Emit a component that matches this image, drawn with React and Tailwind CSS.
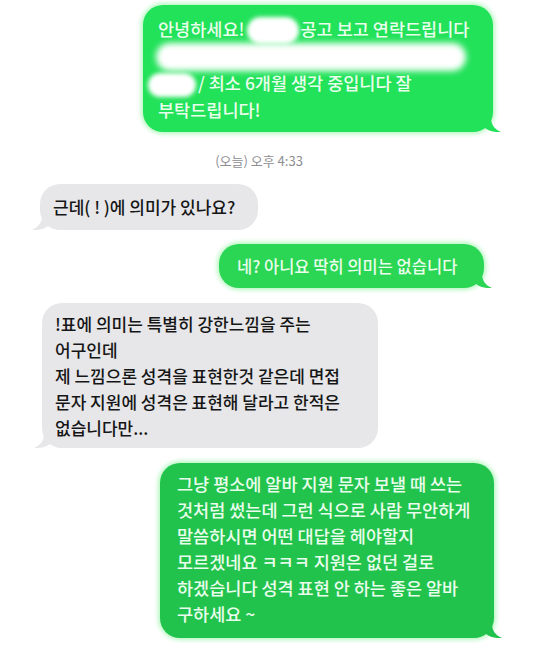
import React from 'react';

const font = { fontFamily: '"Noto Sans CJK KR", "Noto Sans", sans-serif' };

// Bubble tail, drawn as a small curl at the bottom corner
const Tail = ({ side, color }) => (
  <svg
    viewBox="0 0 16 14"
    className={`absolute bottom-0 w-[16px] h-[14px] ${side === 'right' ? '-right-[8px]' : '-left-[8px] -scale-x-100'}`}
  >
    <path d="M0 0 L6 0 C6 6 9 11 16 14 C10 14.6 4 13 0 10 Z" fill={color} />
  </svg>
);

const Sent = ({ color, className, children }) => (
  <div
    className={`relative self-end rounded-[20px] px-[15px] font-medium leading-[26px] text-[#e9fdec] shadow-[0_0_4px_2px_rgba(120,240,140,0.55)] ${className}`}
    style={{ backgroundColor: color }}
  >
    {children}
    <Tail side="right" color={color} />
  </div>
);

const Received = ({ className, children }) => (
  <div className={`relative self-start rounded-[20px] bg-[#e7e7ea] px-[13px] text-[17px] font-medium leading-[26px] text-[#161616] ${className}`}>
    {children}
    <Tail side="left" color="#e7e7ea" />
  </div>
);

const Blob = ({ className }) => (
  <span className={`inline-block align-middle rounded-full bg-white blur-[2px] ${className}`} />
);

export default function App() {
  return (
    <div className="w-[538px] h-[652px] bg-white overflow-hidden flex flex-col pt-[5px]" style={font}>
      {/* first message, partly censored */}
      <Sent color="#22e25a" className="w-[350px] mr-[45px] pt-[11px] pb-[9px] text-[17.5px] whitespace-nowrap">
        <div>
          안녕하세요!<Blob className="w-[52px] h-[27px] mx-[2px] -mt-[2px]" />공고 보고 연락드립니다
        </div>
        <div className="h-[26px] flex items-center">
          <span className="block w-[310px] h-[28px] -ml-[2px] rounded-full bg-white blur-[3px]" />
        </div>
        <div>
          <Blob className="w-[48px] h-[24px] -ml-[10px] mr-[2px]" />/ 최소 6개월 생각 중입니다 잘
        </div>
        <div>부탁드립니다!</div>
      </Sent>

      <div className="mt-[20px] pr-[20px] text-center text-[13px] leading-[18px] text-[#8d8d92]">(오늘) 오후 4:33</div>

      <Received className="ml-[40px] mt-[14px] w-[218px] py-[10px] whitespace-nowrap">근데(&nbsp;!&nbsp;)에 의미가 있나요?</Received>

      <Sent color="#2ad653" className="mt-[14px] mr-[54px] w-[265px] py-[9px] px-[18px] text-[16.5px] whitespace-nowrap">
        네? 아니요 딱히 의미는 없습니다
      </Sent>

      <Received className="ml-[42px] mt-[15px] w-[336px] pt-[8px] pb-[7px] whitespace-nowrap">
        <div>!표에 의미는 특별히 강한느낌을 주는</div>
        <div>어구인데</div>
        <div>제 느낌으론 성격을 표현한것 같은데 면접</div>
        <div>문자 지원에 성격은 표현해 달라고 한적은</div>
        <div>없습니다만...</div>
      </Received>

      <Sent color="#22c34d" className="mt-[15px] mr-[44px] w-[334px] pt-[8px] pb-[11px] px-[17px] text-[17.5px] whitespace-nowrap">
        <div>그냥 평소에 알바 지원 문자 보낼 때 쓰는</div>
        <div>것처럼 썼는데 그런 식으로 사람 무안하게</div>
        <div>말씀하시면 어떤 대답을 헤야할지</div>
        <div>모르겠네요 ㅋㅋㅋ 지원은 없던 걸로</div>
        <div>하겠습니다 성격 표현 안 하는 좋은 알바</div>
        <div>구하세요 ~</div>
      </Sent>
    </div>
  );
}
